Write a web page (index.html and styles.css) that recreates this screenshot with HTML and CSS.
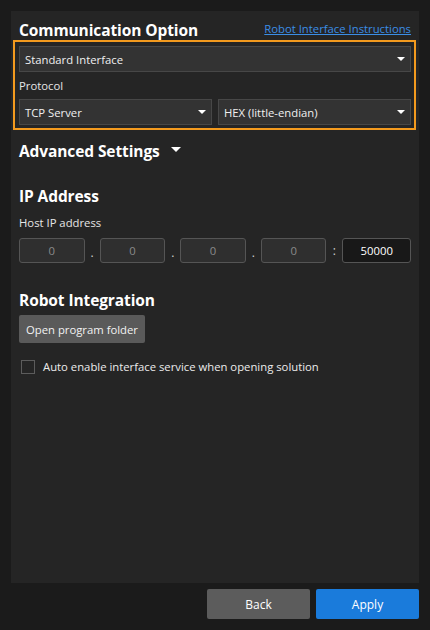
FILE: index.html
```html
<!DOCTYPE html>
<html>
<head>
<meta charset="utf-8">
<link rel="stylesheet" href="styles.css">
</head>
<body>
<div class="window">
  <div class="panel">
    <div class="header">
      <h2 class="title">Communication Option</h2>
      <a class="link" href="#">Robot Interface Instructions</a>
    </div>
    <div class="highlight">
      <div class="select full"><span>Standard Interface</span><i class="caret"></i></div>
      <div class="label">Protocol</div>
      <div class="row">
        <div class="select"><span>TCP Server</span><i class="caret"></i></div>
        <div class="select"><span>HEX (little-endian)</span><i class="caret"></i></div>
      </div>
    </div>
    <div class="adv">
      <h2 class="title">Advanced Settings</h2><i class="caret big"></i>
    </div>
    <h2 class="title ip-title">IP Address</h2>
    <div class="label host">Host IP address</div>
    <div class="ip-row">
      <div class="ip">0</div><span class="sep">.</span>
      <div class="ip">0</div><span class="sep">.</span>
      <div class="ip">0</div><span class="sep">.</span>
      <div class="ip">0</div><span class="sep colon">:</span>
      <div class="ip port">50000</div>
    </div>
    <h2 class="title ri-title">Robot Integration</h2>
    <div class="btn-gray">Open program folder</div>
    <label class="check"><span class="box"></span><span>Auto enable interface service when opening solution</span></label>
  </div>
  <div class="footer">
    <div class="btn back">Back</div>
    <div class="btn apply">Apply</div>
  </div>
</div>
</body>
</html>
```
FILE: styles.css
```css
* { box-sizing: border-box; }
html, body { margin: 0; padding: 0; }
body {
  background: #1b1b1b;
  font-family: "Open Sans", "Noto Sans", sans-serif;
  color: #e8e8e8;
  width: 430px;
  height: 630px;
  overflow: hidden;
}
.window {
  padding: 11px 11px 0 11px;
  height: 630px;
  display: flex;
  flex-direction: column;
}
.panel {
  background: #252525;
  height: 572px;
  padding: 8px 8px 0 8px;
}
.header {
  display: flex;
  justify-content: space-between;
  align-items: flex-end;
  height: 21px;
}
.title {
  margin: 0;
  font-size: 15.5px;
  font-weight: 700;
  color: #ffffff;
  line-height: 20px;
  letter-spacing: -0.1px;
}
.link {
  color: #3b8ee6;
  font-size: 11.3px;
  text-decoration: underline;
  line-height: 16px;
  margin-bottom: 3px;
}
.highlight {
  margin: 0 -5px 0 -6px;
  border: 2px solid #f39a1e;
  padding: 4px 3px 3px 4px;
}
.select {
  height: 26px;
  background: #333333;
  border: 1px solid #474747;
  display: flex;
  align-items: center;
  justify-content: space-between;
  padding: 0 5px 0 5px;
  font-size: 11.3px;
  color: #f0f0f0;
}
.caret {
  width: 0;
  height: 0;
  border-left: 4px solid transparent;
  border-right: 4px solid transparent;
  border-top: 4px solid #ffffff;
  margin-right: 0;
}
.caret.big {
  border-left-width: 5px;
  border-right-width: 5px;
  border-top-width: 5px;
  margin-left: 11px;
  margin-top: -4px;
}
.label {
  font-size: 11.3px;
  color: #e6e6e6;
  line-height: 16px;
  margin: 6px 0 5px 0;
}
.row {
  display: flex;
  gap: 6px;
}
.row .select { flex: 1; }
.adv {
  display: flex;
  align-items: center;
  margin-top: 11px;
  height: 20px;
}
.ip-title { margin-top: 25px; }
.host { margin: 9px 0 7px 0; }
.ip-row {
  display: flex;
  align-items: center;
  height: 25px;
}
.ip {
  width: 66px;
  height: 25px;
  background: #2f2f2f;
  border: 1px solid #555555;
  border-radius: 3px;
  display: flex;
  align-items: center;
  justify-content: center;
  font-size: 11.3px;
  color: #8a8a8a;
}
.ip.port {
  width: 69px;
  background: #181818;
  color: #ffffff;
}
.sep {
  width: 15px;
  text-align: center;
  font-size: 12px;
  color: #cfcfcf;
  padding-top: 4px;
}
.sep.colon { width: 16px; padding-top: 0; }
.ri-title { margin-top: 27px; }
.btn-gray {
  display: inline-flex;
  align-items: center;
  margin-top: 5px;
  height: 28px;
  padding: 0 7px;
  background: #5a5a5a;
  border-radius: 2px;
  font-size: 11.3px;
  color: #f2f2f2;
}
.check {
  display: flex;
  align-items: center;
  margin-top: 16px;
  margin-left: 2px;
  font-size: 11.3px;
  color: #ececec;
}
.box {
  width: 14px;
  height: 14px;
  border: 1px solid #5c5c5c;
  background: #252525;
  margin-right: 8px;
}
.footer {
  display: flex;
  justify-content: flex-end;
  gap: 6px;
  padding-top: 6px;
}
.btn {
  width: 103px;
  height: 30px;
  border-radius: 2px;
  display: flex;
  align-items: center;
  justify-content: center;
  font-size: 12px;
  color: #ffffff;
}
.back { background: #5c5c5c; }
.apply { background: #1a7bdb; }
```
